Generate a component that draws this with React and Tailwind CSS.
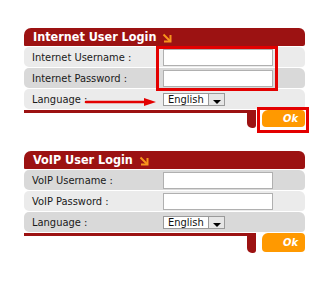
import React from "react";

const RED = "bg-[#9c1212]";

function CornerArrow() {
  return (
    <svg width="10" height="10" viewBox="0 0 10 10" className="ml-[6px] mt-[1px]">
      <path d="M1.5 1.5 L8 8" stroke="#f7941d" strokeWidth="2" fill="none" />
      <path d="M2 8.5 H8.5 V2" stroke="#f7941d" strokeWidth="2" fill="none" />
    </svg>
  );
}

function Select() {
  return (
    <div className="flex items-center h-[13px] w-[62px] bg-white border border-[#9a9a9a] pl-[4px] text-[11px] text-[#111] leading-none">
      <span className="flex-1 pt-[1px]">English</span>
      <span className="relative w-[16px] h-full border-l border-[#9a9a9a] bg-[#e6e6e6]">
        <span className="absolute left-[4px] bottom-[1px] w-0 h-0 border-l-[4px] border-r-[4px] border-t-[4px] border-l-transparent border-r-transparent border-t-black" />
      </span>
    </div>
  );
}

function Input() {
  return <div className="w-[110px] h-[17px] bg-white border border-[#b0b0b0]" />;
}

function Section({ title, rows, lightFirst, tall }) {
  return (
    <div className="w-[281px]">
      <div className={`${RED} h-[18px] rounded-tl-[7px] rounded-tr-[6px] rounded-br-[2px] rounded-bl-[1px] flex items-center pl-[9px]`}>
        <span className="text-white font-bold text-[12.5px] leading-none">{title}</span>
        <CornerArrow />
      </div>
      {rows.map((r, i) => {
        const light = lightFirst ? i % 2 === 0 : i % 2 === 1;
        return (
          <div
            key={i}
            className={`flex items-center h-[20px] mt-[1px] rounded-l-[5px] rounded-tr-[6px] rounded-br-[4px] ${light ? "bg-[#ebebeb]" : "bg-[#d9d9d9]"}`}
          >
            <div className="w-[139px] pl-[8px] text-[11px] text-[#1a1a1a] leading-none">{r.label}</div>
            {r.type === "input" ? <Input /> : <Select />}
          </div>
        );
      })}
      <div className="flex items-start mt-[1px]">
        <div className="w-[232px] flex flex-col">
          <div className={`${RED} h-[3px] w-full`} />
          <div className={`${RED} self-end w-[9px] ${tall ? "h-[17px]" : "h-[15px]"} rounded-bl-[5px] rounded-br-[3px]`} />
        </div>
        <div className={`ml-[6px] w-[43px] ${tall ? "h-[19px]" : "h-[17px]"} bg-[#ff9900] rounded-[4px] rounded-tl-[6px] flex items-center justify-end pr-[7px]`}>
          <span className="text-white font-bold italic text-[11px] leading-none">Ok</span>
        </div>
      </div>
    </div>
  );
}

export default function App() {
  return (
    <div className="w-[335px] h-[293px] bg-white relative" style={{ fontFamily: "'DejaVu Sans Condensed','Liberation Sans',sans-serif" }}>
      <div className="pt-[28px] pl-[24px]">
        <Section
          title="Internet User Login"
          lightFirst
          rows={[
            { label: "Internet Username :", type: "input" },
            { label: "Internet Password :", type: "input" },
            { label: "Language :", type: "select" },
          ]}
        />
        <div className="h-[23px]" />
        <Section
          title="VoIP User Login"
          lightFirst={false}
          tall
          rows={[
            { label: "VoIP Username :", type: "input" },
            { label: "VoIP Password :", type: "input" },
            { label: "Language :", type: "select" },
          ]}
        />
      </div>
      {/* annotations */}
      <div className="absolute left-[156px] top-[46px] w-[122px] h-[45px] border-[3px] border-[#e30000]" />
      <div className="absolute left-[257px] top-[107px] w-[52px] h-[26px] border-[3px] border-[#e30000]" />
      <svg className="absolute left-[84px] top-[97px]" width="74" height="10" viewBox="0 0 74 10">
        <path d="M2 5 H62" stroke="#e30000" strokeWidth="2.5" strokeLinecap="round" />
        <path d="M60 1 L72 5 L60 9 Z" fill="#e30000" />
      </svg>
    </div>
  );
}
